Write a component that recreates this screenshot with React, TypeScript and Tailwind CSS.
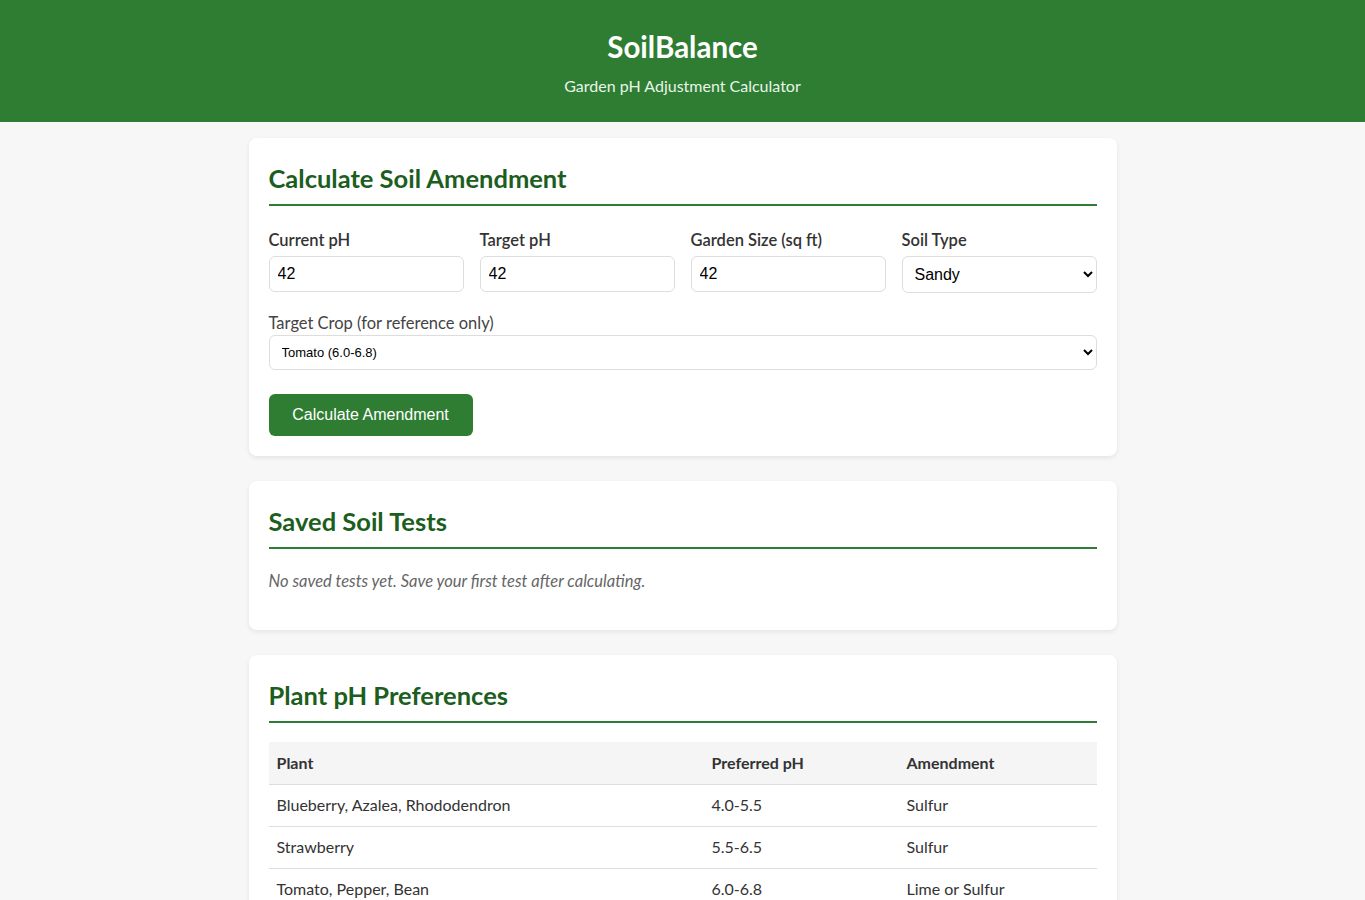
const FONT = "font-['Segoe_UI','Lato','Noto_Sans',sans-serif]";

const PLANTS = [
  { plant: 'Blueberry, Azalea, Rhododendron', ph: '4.0-5.5', amend: 'Sulfur' },
  { plant: 'Strawberry', ph: '5.5-6.5', amend: 'Sulfur' },
  { plant: 'Tomato, Pepper, Bean', ph: '6.0-6.8', amend: 'Lime or Sulfur' },
  { plant: 'Lettuce, Spinach, Broccoli', ph: '6.0-7.0', amend: 'Lime or Sulfur' },
  { plant: 'Asparagus, Beet', ph: '6.5-7.5', amend: 'Lime' },
];

export default function App() {
  return (
    <div className={`min-h-screen bg-[#f7f7f7] text-[#333] ${FONT}`}>
      <header className="h-[122px] bg-[#2e7d32] pt-[30px] text-center text-white">
        <h1 className="text-[29.5px] font-bold leading-[34px]">SoilBalance</h1>
        <p className="mt-[11px] text-[16px] leading-[22px] text-[#e8f5e9]">
          Garden pH Adjustment Calculator
        </p>
      </header>

      <main className="mx-auto max-w-[900px] px-4 pt-4 pb-6">
        {/* ── Calculator ─────────────────────────────── */}
        <Card title="Calculate Soil Amendment">
          <div className="grid grid-cols-4 gap-4">
            <Field label="Current pH">
              <input
                defaultValue="42"
                className="h-9 w-full rounded-md border border-[#ddd] bg-white px-2 font-['Liberation_Sans',Arial,sans-serif] text-[16px] text-black outline-none"
              />
            </Field>
            <Field label="Target pH">
              <input
                defaultValue="42"
                className="h-9 w-full rounded-md border border-[#ddd] bg-white px-2 font-['Liberation_Sans',Arial,sans-serif] text-[16px] text-black outline-none"
              />
            </Field>
            <Field label="Garden Size (sq ft)">
              <input
                defaultValue="42"
                className="h-9 w-full rounded-md border border-[#ddd] bg-white px-2 font-['Liberation_Sans',Arial,sans-serif] text-[16px] text-black outline-none"
              />
            </Field>
            <Field label="Soil Type">
              <select
                defaultValue="Sandy"
                className="h-[37px] w-full rounded-md border border-[#ddd] bg-white px-2 font-['Liberation_Sans',Arial,sans-serif] text-[16px] text-black outline-none"
              >
                <option>Sandy</option>
                <option>Loam</option>
                <option>Clay</option>
              </select>
            </Field>
          </div>

          <div className="mt-[18px]">
            <label className="block text-[16.5px] leading-[24px] text-[#444]">
              Target Crop (for reference only)
            </label>
            <select
              defaultValue="Tomato (6.0-6.8)"
              className="h-[35px] w-full rounded-md border border-[#ddd] bg-white px-2 font-['Liberation_Sans',Arial,sans-serif] text-[13px] text-black outline-none"
            >
              <option>Tomato (6.0-6.8)</option>
              <option>Blueberry (4.0-5.5)</option>
              <option>Strawberry (5.5-6.5)</option>
            </select>
          </div>

          <button className="mt-6 h-[42px] w-[204px] rounded-md bg-[#2e7d32] font-['Liberation_Sans',Arial,sans-serif] text-[16px] text-white">
            Calculate Amendment
          </button>
        </Card>

        {/* ── Saved tests ───────────────────────────── */}
        <Card title="Saved Soil Tests">
          <p className="pb-[19px] text-[16.5px] leading-[20px] text-[#666] italic">
            No saved tests yet. Save your first test after calculating.
          </p>
        </Card>

        {/* ── Reference table ──────────────────────── */}
        <Card title="Plant pH Preferences" tight>
          <table className="w-full border-collapse text-left text-[16px]">
            <thead>
              <tr className="h-[42px] border-b border-[#ddd] bg-[#f5f5f5]">
                <th className="w-[435px] px-2 font-bold">Plant</th>
                <th className="w-[195px] px-2 font-bold">Preferred pH</th>
                <th className="px-2 font-bold">Amendment</th>
              </tr>
            </thead>
            <tbody>
              {PLANTS.map((p) => (
                <tr key={p.plant} className="h-[42px] border-b border-[#ddd]">
                  <td className="px-2">{p.plant}</td>
                  <td className="px-2">{p.ph}</td>
                  <td className="px-2">{p.amend}</td>
                </tr>
              ))}
            </tbody>
          </table>
        </Card>
      </main>
    </div>
  );
}

function Card({
  title,
  tight,
  children,
}: {
  title: string;
  tight?: boolean;
  children: React.ReactNode;
}) {
  return (
    <section className="mb-[25px] rounded-lg bg-white px-5 pt-6 pb-5 shadow-[0_2px_5px_rgba(0,0,0,0.08)]">
      <h2
        className={`${tight ? 'mb-[19px]' : 'mb-[22px]'} border-b-2 border-[#2e7d32] pb-[10px] text-[25.5px] leading-[32px] font-bold text-[#1b5e20]`}
      >
        {title}
      </h2>
      {children}
    </section>
  );
}

function Field({ label, children }: { label: string; children: React.ReactNode }) {
  return (
    <div>
      <label className="mb-[4px] block text-[16.5px] leading-[24px] font-semibold text-[#333]">
        {label}
      </label>
      {children}
    </div>
  );
}
